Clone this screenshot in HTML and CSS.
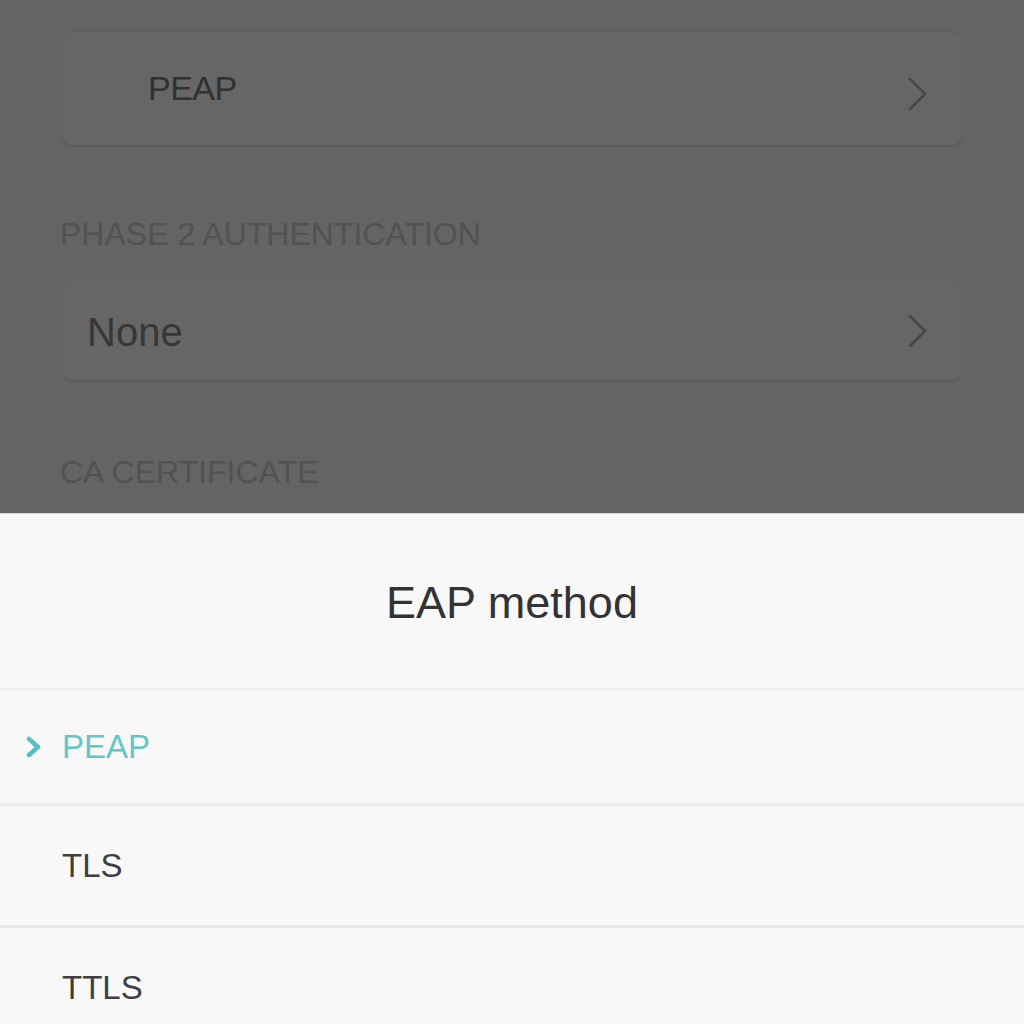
FILE: index.html
```html
<!DOCTYPE html>
<html>
<head>
<meta charset="utf-8">
<link rel="stylesheet" href="styles.css">
</head>
<body>
<div class="screen">
  <div class="backdrop">
    <div class="card card-first">
      <span class="card-value card-value-indented">PEAP</span>
      <svg class="card-chevron" viewBox="0 0 20 34" width="20" height="34"><path d="M2 2 L17 17 L2 32" fill="none" stroke="#474747" stroke-width="2.6" stroke-linecap="round" stroke-linejoin="round"/></svg>
    </div>
    <div class="section-label label-phase">PHASE 2 AUTHENTICATION</div>
    <div class="card card-second">
      <span class="card-value card-value-large">None</span>
      <svg class="card-chevron card-chevron-up" viewBox="0 0 20 34" width="20" height="34"><path d="M2 2 L17 17 L2 32" fill="none" stroke="#474747" stroke-width="2.6" stroke-linecap="round" stroke-linejoin="round"/></svg>
    </div>
    <div class="section-label label-ca">CA CERTIFICATE</div>
  </div>
  <div class="sheet">
    <div class="sheet-title">EAP method</div>
    <div class="option option-selected option-first">
      <svg class="option-check" viewBox="0 0 18 22" width="18" height="22"><path d="M4 3 L13 11 L4 19" fill="none" stroke="#56c0c4" stroke-width="4.5" stroke-linecap="round" stroke-linejoin="round"/></svg>
      <span class="option-text">PEAP</span>
    </div>
    <div class="option option-second">
      <span class="option-text">TLS</span>
    </div>
    <div class="option option-third">
      <span class="option-text">TTLS</span>
    </div>
  </div>
</div>
</body>
</html>
```

FILE: styles.css
```css
html, body {
  margin: 0;
  padding: 0;
}
body {
  width: 1024px;
  height: 1024px;
  overflow: hidden;
  font-family: "Liberation Sans", Arial, sans-serif;
  background: #f8f8f8;
}
.screen {
  width: 1024px;
  height: 1024px;
  display: flex;
  flex-direction: column;
  overflow: hidden;
}
.backdrop {
  height: 513px;
  box-sizing: border-box;
  background: #646464;
  padding: 31px 62px 0 62px;
  display: flex;
  flex-direction: column;
  flex-shrink: 0;
}
.card {
  background: #666666;
  border: 1px solid #5f5f5f;
  border-radius: 10px;
  box-sizing: border-box;
  display: flex;
  align-items: center;
  justify-content: space-between;
  padding-right: 33px;
  box-shadow: 0 1px 0 #5c5c5c;
}
.card-first {
  height: 115px;
}
.card-second {
  height: 103px;
}
.card-value {
  color: #313131;
}
.card-value-indented {
  font-size: 34px;
  padding-left: 85px;
  letter-spacing: -0.5px;
}
.card-value-large {
  font-size: 40px;
  padding-left: 24px;
  padding-top: 5px;
  color: #373737;
}
.card-chevron {
  display: block;
  margin-top: 10px;
}
.card-chevron-up {
  margin-top: 2px;
}
.section-label {
  font-size: 32px;
  line-height: 36px;
  color: #525252;
  margin-left: -2px;
}
.label-phase {
  margin-top: 70px;
  margin-bottom: 26px;
}
.label-ca {
  margin-top: 73px;
}
.sheet {
  flex: 1;
  background: #f8f8f8;
  border-top: 1px solid #d8d8d8;
  display: flex;
  flex-direction: column;
}
.sheet-title {
  height: 174px;
  display: flex;
  align-items: center;
  justify-content: center;
  font-size: 45px;
  color: #333333;
  padding-top: 4px;
  box-sizing: border-box;
}
.option {
  display: flex;
  align-items: center;
  padding-left: 62px;
  position: relative;
  flex-shrink: 0;
}
.option-first {
  height: 113px;
  border-top: 2px solid #efefef;
}
.option-second {
  height: 119px;
  border-top: 3px solid #ebebeb;
}
.option-third {
  height: 119px;
  border-top: 3px solid #e7e7e7;
}
.option-text {
  font-size: 33px;
  color: #3f3f3f;
}
.option-selected .option-text {
  color: #63c7ca;
}
.option-check {
  position: absolute;
  left: 25px;
  top: 50%;
  margin-top: -11px;
}
```
